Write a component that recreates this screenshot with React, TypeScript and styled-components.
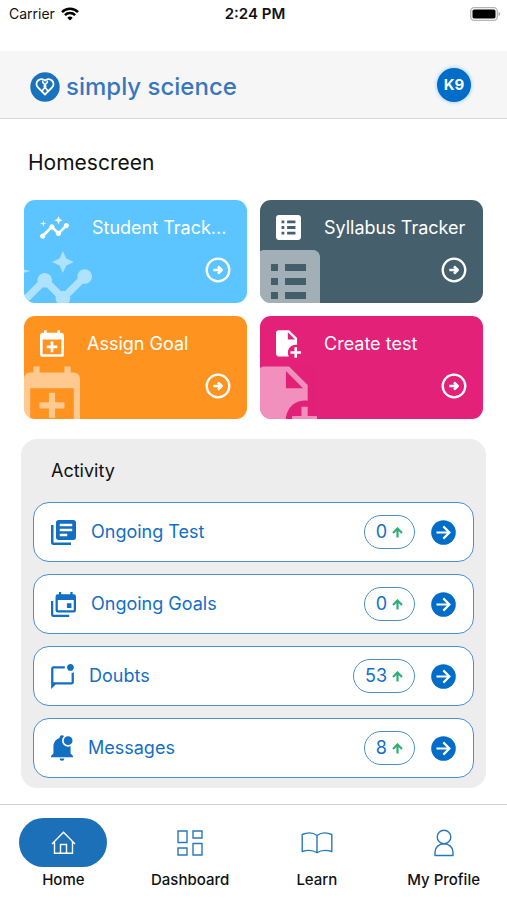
import React from "react";
import styled, { createGlobalStyle } from "styled-components";

const GlobalStyle = createGlobalStyle`
  *, *::before, *::after { box-sizing: border-box; }
  body {
    margin: 0;
    background: #ffffff;
    color: #111111;
    font-family: Inter, "Open Sans", sans-serif;
    font-weight: 400;
  }
  button { font: inherit; color: inherit; border: 0; padding: 0; background: none; cursor: pointer; }
  a { color: inherit; text-decoration: none; }
  h1, h2 { margin: 0; font-weight: 400; }
  svg { display: block; flex: none; }
`;

const Screen = styled.div`
  display: flex;
  flex-direction: column;
  min-height: 100vh;
`;

const StatusBar = styled.div`
  display: grid;
  grid-template-columns: 1fr auto 1fr;
  align-items: center;
  height: 28px;
  margin-bottom: 23px;
  padding: 0 6px 0 9px;
  font-size: 14px;
  line-height: 20px;
`;

const Carrier = styled.span`
  display: flex;
  align-items: center;
  gap: 6px;
`;

const Clock = styled.span`
  font-size: 15px;
  font-weight: 600;
`;

const Battery = styled.span`
  justify-self: end;
`;

const Header = styled.header`
  display: flex;
  align-items: center;
  justify-content: space-between;
  height: 68px;
  padding: 0 36px 0 30px;
  background: #f6f6f7;
  border-bottom: 1px solid #d6d6d6;
`;

const Brand = styled.a`
  display: flex;
  align-items: center;
  gap: 6px;
  padding-top: 4px;
  color: #3a76bd;
  font-size: 24px;
  font-weight: 500;
  line-height: 32px;
`;

const Avatar = styled.button`
  width: 34px;
  height: 34px;
  border-radius: 50%;
  background: #006dc8;
  box-shadow: 0 0 4px #8cc4f2;
  color: #ffffff;
  font-size: 15px;
  font-weight: 700;
`;

const Main = styled.main`
  padding: 28px 21px 16px;
`;

const PageTitle = styled.h1`
  padding-left: 7px;
  font-size: 21px;
  line-height: 32px;
`;

const CardGrid = styled.div`
  display: grid;
  grid-template-columns: 1fr 1fr;
  gap: 13px;
  margin: 21px 3px 20px;
`;

const Card = styled.button<{ $color: string }>`
  position: relative;
  display: flex;
  flex-direction: column;
  justify-content: space-between;
  height: 103px;
  padding: 0 16px 20px;
  overflow: hidden;
  border-radius: 11px;
  background: ${(p) => p.$color};
  color: #ffffff;
  text-align: left;
`;

const CardHead = styled.span`
  display: flex;
  align-items: center;
  gap: 23px;
  height: 55px;
  font-size: 18px;
  line-height: 24px;
  white-space: nowrap;
`;

const CardArrow = styled.span`
  align-self: flex-end;
`;

const Watermark = styled.span<{ $x: number; $y: number }>`
  position: absolute;
  left: ${(p) => p.$x}px;
  top: ${(p) => p.$y}px;
  opacity: 0.5;
`;

const Panel = styled.section`
  padding: 16px 12px 10px;
  border-radius: 16px;
  background: #ededed;
`;

const PanelTitle = styled.h2`
  padding-left: 18px;
  font-size: 18px;
  line-height: 32px;
`;

const RowList = styled.div`
  display: flex;
  flex-direction: column;
  gap: 12px;
  margin-top: 15px;
`;

const Row = styled.button`
  display: flex;
  align-items: center;
  height: 60px;
  padding: 0 17px;
  border: 1px solid #4c8fce;
  border-radius: 16px;
  background: #ffffff;
  color: #126fc4;
  font-size: 18px;
  line-height: 24px;
  text-align: left;
`;

const RowLabel = styled.span`
  flex: 1;
  margin-left: 15px;
`;

const Count = styled.span`
  display: flex;
  align-items: center;
  justify-content: center;
  gap: 5px;
  height: 34px;
  margin-right: 16px;
  padding: 0 11px;
  border: 1px solid #4c8fce;
  border-radius: 17px;
`;

const TabBar = styled.nav`
  display: grid;
  grid-template-columns: repeat(4, 1fr);
  height: 96px;
  margin-top: auto;
  padding-top: 13px;
  border-top: 1px solid #d0d0d0;
`;

const Tab = styled.a`
  display: flex;
  flex-direction: column;
  align-items: center;
  gap: 3px;
  font-size: 15px;
  font-weight: 500;
  line-height: 20px;
`;

const TabIcon = styled.span<{ $active?: boolean }>`
  display: flex;
  align-items: center;
  justify-content: center;
  width: 88px;
  height: 49px;
  border-radius: 25px;
  background: ${(p) => (p.$active ? "#1b70b8" : "transparent")};
  color: ${(p) => (p.$active ? "#ffffff" : "#2878bd")};
`;

type Glyph = { d: string; box: [number, number, number, number]; scale: number };

const glyphs: Record<string, Glyph> = {
  insights: {
    box: [1, 3, 22, 17],
    scale: 1.34,
    d: "M21 8c-1.45 0-2.26 1.44-1.93 2.51l-3.55 3.56c-.3-.09-.74-.09-1.04 0l-2.55-2.55C12.27 10.45 11.46 9 10 9c-1.45 0-2.27 1.44-1.93 2.52l-4.56 4.55C2.44 15.74 1 16.55 1 18c0 1.1.9 2 2 2 1.45 0 2.26-1.44 1.93-2.51l4.55-4.56c.3.09.74.09 1.04 0l2.55 2.55C12.73 16.55 13.54 18 15 18c1.45 0 2.27-1.44 1.93-2.52l3.56-3.55c1.07.33 2.51-.48 2.51-1.93 0-1.1-.9-2-2-2zM15 9l.94-2.07L18 6l-2.06-.93L15 3l-.92 2.07L12 6l2.08.93zM3.5 11 4 9l2-.5L4 8l-.5-2L3 8l-2 .5L3 9z",
  },
  list: {
    box: [3, 3, 18, 18],
    scale: 1.39,
    d: "M19 3H5c-1.1 0-2 .9-2 2v14c0 1.1.9 2 2 2h14c1.1 0 2-.9 2-2V5c0-1.1-.9-2-2-2M7 7h2v2H7V7m0 4h2v2H7v-2m0 4h2v2H7v-2m10 2h-6v-2h6v2m0-4h-6v-2h6v2m0-4h-6V7h6v2z",
  },
  calendarPlus: {
    box: [3, 1, 18, 20],
    scale: 1.36,
    d: "M19 19V8H5v11h14M16 1h2v2h1c1.1 0 2 .9 2 2v14a2 2 0 0 1-2 2H5c-1.11 0-2-.9-2-2V5c0-1.11.89-2 2-2h1V1h2v2h8V1m-5 8.5h2v3h3v2h-3v3h-2v-3H8v-2h3v-3z",
  },
  filePlus: {
    box: [4, 2, 19, 21],
    scale: 1.33,
    d: "M14 2H6c-1.11 0-2 .89-2 2v16c0 1.11.89 2 2 2h7.81A6 6 0 0 1 19 13c.34 0 .67.03 1 .08V8l-6-6m-1 7V3.5L18.5 9H13m10 11h-3v3h-2v-3h-3v-2h3v-3h2v3h3v2z",
  },
  books: {
    box: [2, 2, 20, 20],
    scale: 1.25,
    d: "M4 6H2v14c0 1.1.9 2 2 2h14v-2H4V6zm16-4H8c-1.1 0-2 .9-2 2v12c0 1.1.9 2 2 2h12c1.1 0 2-.9 2-2V4c0-1.1-.9-2-2-2zm-1 9H9V9h10v2zm-4 4H9v-2h6v2zm4-8H9V5h10v2z",
  },
  calendars: {
    box: [1, 1, 22, 22],
    scale: 1.14,
    d: "M21 17V8H7v9h14m0-14a2 2 0 0 1 2 2v12a2 2 0 0 1-2 2H7a2 2 0 0 1-2-2V5a2 2 0 0 1 2-2h1V1h2v2h8V1h2v2h1M3 21h14v2H3a2 2 0 0 1-2-2V9h2v12m16-6h-4v-4h4v4z",
  },
  chat: {
    box: [2, 0, 20, 22],
    scale: 1.14,
    d: "M22 6.98V16c0 1.1-.9 2-2 2H6l-4 4V4c0-1.1.9-2 2-2h10.1a5 5 0 0 0 0 2H4v12h16V7.9c.74-.15 1.42-.48 2-.92zM16 3c0 1.66 1.34 3 3 3s3-1.34 3-3-1.34-3-3-3-3 1.34-3 3z",
  },
};

const GlyphIcon = ({ name, scale }: { name: string; scale?: number }) => {
  const g = glyphs[name];
  const s = scale ?? g.scale;
  return (
    <svg
      width={Math.round(g.box[2] * s)}
      height={Math.round(g.box[3] * s)}
      viewBox={g.box.join(" ")}
      fill="currentColor"
      aria-hidden="true"
    >
      <path fillRule={name === "insights" ? "nonzero" : "evenodd"} d={g.d} />
    </svg>
  );
};

const BellIcon = () => (
  <svg width="22" height="26" viewBox="3 2 18 21" fill="currentColor" aria-hidden="true">
    <path d="M21 19v1H3v-1l2-2v-6c0-3.1 2.03-5.83 5-6.71V4a2 2 0 0 1 4 0v.29c2.97.88 5 3.61 5 6.71v6l2 2m-7 2a2 2 0 0 1-4 0" />
    <circle cx="17" cy="6.5" r="5" fill="#ffffff" />
    <circle cx="17" cy="6.5" r="3.6" />
  </svg>
);

const OutlineArrow = () => (
  <svg width="26" height="26" viewBox="0 0 26 26" fill="none" stroke="currentColor" strokeWidth="2.3" aria-hidden="true">
    <circle cx="13" cy="13" r="11.3" />
    <path d="M8.3 13h7M13 9.4l3.6 3.6-3.6 3.6" strokeWidth="2.7" strokeLinejoin="round" />
  </svg>
);

const SolidArrow = () => (
  <svg width="25" height="25" viewBox="0 0 25 25" fill="none" aria-hidden="true">
    <circle cx="12.5" cy="12.5" r="12.3" fill="#006dc8" />
    <path d="M5.5 12.5H18M12.3 6.4l6.1 6.1-6.1 6.1" stroke="#ffffff" strokeWidth="2.2" />
  </svg>
);

const UpArrow = () => (
  <svg width="11" height="11" viewBox="0 0 11 11" fill="none" stroke="#2fae79" strokeWidth="2.2" aria-hidden="true">
    <path d="M5.5 10.5V2M1 6l4.5-4.5L10 6" />
  </svg>
);

const LogoMark = () => (
  <svg width="30" height="30" viewBox="0 0 30 30" fill="none" aria-hidden="true">
    <circle cx="15" cy="15" r="14.7" fill="#1a72bd" />
    <g stroke="#ffffff" strokeWidth="1.9" strokeLinejoin="round" strokeLinecap="round">
      <path d="M15 8.7c-2-2-5-2-6.9-.2-2 1.9-2 4.9-.2 6.8L15 22.5l7.1-7.2c1.8-1.9 1.8-4.9-.2-6.8C20 6.7 17 6.7 15 8.7z" />
      <path
        d="M12.6 9.2c-.8 2.3 3.8 3 3.2 5.5-.4 1.7-3.1 1.7-3.1 3.8M17.4 9.2c.8 2.3-3.8 3-3.2 5.5.4 1.7 3.1 1.7 3.1 3.8"
        strokeWidth="1.6"
      />
    </g>
  </svg>
);

const WifiIcon = () => (
  <svg width="18" height="14" viewBox="0 0 18 14" fill="none" stroke="#000000" strokeWidth="2.5" aria-hidden="true">
    <path d="M1 5.1a11.3 11.3 0 0 1 16 0M3.9 8.2a7.2 7.2 0 0 1 10.2 0" />
    <path d="M9 13.6 6.3 10.8a3.8 3.8 0 0 1 5.4 0z" fill="#000000" stroke="none" />
  </svg>
);

const BatteryIcon = () => (
  <svg width="31" height="14" viewBox="0 0 31 14" aria-hidden="true">
    <rect x="0.7" y="0.7" width="26.6" height="12.6" rx="3.5" fill="#ffffff" stroke="#b4b4b4" strokeWidth="1.3" />
    <rect x="2.5" y="2.5" width="23" height="9" rx="1.8" fill="#000000" />
    <path d="M28.6 4.8c2 .8 2 3.6 0 4.400z" fill="#a8a8a8" />
  </svg>
);

const HomeIcon = () => (
  <svg width="25" height="23" viewBox="0 0 25 23" fill="none" stroke="currentColor" strokeWidth="1.4" aria-hidden="true">
    <path d="M1 13 12.5 1.3 24 13M3.500 10.500v11.700h18V10.500M9.500 22.200v-8.700h6v8.700" />
  </svg>
);

const DashboardIcon = () => (
  <svg width="26" height="26" viewBox="0 0 26 26" fill="none" stroke="currentColor" strokeWidth="1.4" aria-hidden="true">
    <path d="M1 1h9v11.5H1zM16 1h9v7h-9zM1 18h9v7H1zM16 13.5h9V25h-9z" />
  </svg>
);

const BookIcon = () => (
  <svg width="32" height="22" viewBox="0 0 32 22" fill="none" stroke="currentColor" strokeWidth="1.4" strokeLinejoin="round" aria-hidden="true">
    <path d="M16 3.500C12 .5 6 .5 1.200 2.500v17c5-1.500 10.800-1.500 14.800 1.300 4-2.800 9.800-2.800 14.800-1.300v-17C26 .5 20 .5 16 3.500v17.300" />
  </svg>
);

const ProfileIcon = () => (
  <svg width="20" height="28" viewBox="0 0 20 28" fill="none" stroke="currentColor" strokeWidth="1.400" strokeLinejoin="round" aria-hidden="true">
    <circle cx="10" cy="8" r="6.800" />
    <path d="M1 26.500V23c0-4.700 4-8.200 9-8.200s9 3.500 9 8.200v3.500z" />
  </svg>
);

const cards = [
  { label: "Student Track...", color: "#5cc5ff", icon: "insights", big: 3.65, x: -12, y: 51 },
  { label: "Syllabus Tracker", color: "#455f6c", icon: "list", big: 3.5, x: -3, y: 50 },
  { label: "Assign Goal", color: "#ff9320", icon: "calendarPlus", big: 3.13, x: 0, y: 50 },
  { label: "Create test", color: "#e32178", icon: "filePlus", big: 3.13, x: -2, y: 50 },
];

const activities = [
  { label: "Ongoing Test", icon: <GlyphIcon name="books" />, count: 0 },
  { label: "Ongoing Goals", icon: <GlyphIcon name="calendars" />, count: 0 },
  { label: "Doubts", icon: <GlyphIcon name="chat" />, count: 53 },
  { label: "Messages", icon: <BellIcon />, count: 8 },
];

const tabs = [
  { label: "Home", icon: <HomeIcon />, href: "#home", active: true },
  { label: "Dashboard", icon: <DashboardIcon />, href: "#dashboard" },
  { label: "Learn", icon: <BookIcon />, href: "#learn" },
  { label: "My Profile", icon: <ProfileIcon />, href: "#profile" },
];

export default function App() {
  return (
    <Screen>
      <GlobalStyle />
      <StatusBar>
        <Carrier>
          Carrier <WifiIcon />
        </Carrier>
        <Clock>2:24 PM</Clock>
        <Battery>
          <BatteryIcon />
        </Battery>
      </StatusBar>
      <Header>
        <Brand href="#home">
          <LogoMark />
          simply science
        </Brand>
        <Avatar type="button">K9</Avatar>
      </Header>
      <Main>
        <PageTitle>Homescreen</PageTitle>
        <CardGrid>
          {cards.map((c) => (
            <Card key={c.label} type="button" $color={c.color}>
              <Watermark $x={c.x} $y={c.y}>
                <GlyphIcon name={c.icon} scale={c.big} />
              </Watermark>
              <CardHead>
                <GlyphIcon name={c.icon} />
                {c.label}
              </CardHead>
              <CardArrow>
                <OutlineArrow />
              </CardArrow>
            </Card>
          ))}
        </CardGrid>
        <Panel>
          <PanelTitle>Activity</PanelTitle>
          <RowList>
            {activities.map((a) => (
              <Row key={a.label} type="button">
                {a.icon}
                <RowLabel>{a.label}</RowLabel>
                <Count>
                  {a.count}
                  <UpArrow />
                </Count>
                <SolidArrow />
              </Row>
            ))}
          </RowList>
        </Panel>
      </Main>
      <TabBar>
        {tabs.map((t) => (
          <Tab key={t.label} href={t.href}>
            <TabIcon $active={t.active}>{t.icon}</TabIcon>
            {t.label}
          </Tab>
        ))}
      </TabBar>
    </Screen>
  );
}
